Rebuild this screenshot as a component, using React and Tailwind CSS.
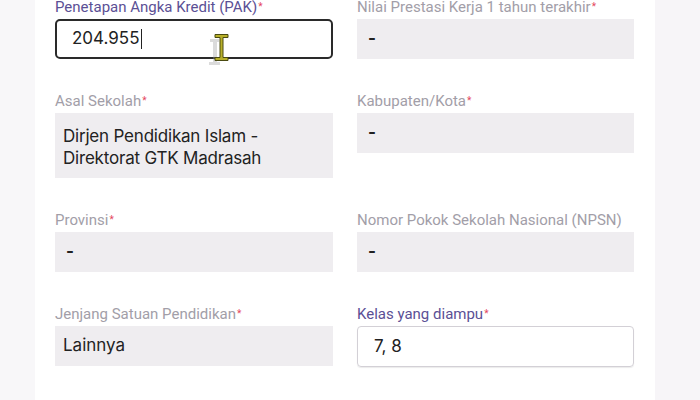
const Label = ({ children, active }) => (
  <div
    className={`h-5 mb-px text-[15px] leading-[18px] font-['Roboto',sans-serif] whitespace-nowrap ${
      active ? "text-[#5b5095]" : "text-[#a29ea8]"
    }`}
  >
    {children}
    <sup className="text-[#e4465c] text-[10px] ml-px relative -top-[2px]">*</sup>
  </div>
);

const LabelPlain = ({ children }) => (
  <div className="h-5 mb-px text-[15px] leading-[18px] font-['Roboto',sans-serif] text-[#a29ea8] whitespace-nowrap">
    {children}
  </div>
);

const ReadBox = ({ children, tall }) => (
  <div
    className={`bg-[#efedf0] px-2 text-[17px] text-[#222] font-['Inter',sans-serif] ${
      tall ? "h-[65px] py-[12px] leading-[22px] tracking-[-0.2px]" : "h-10 flex items-center"
    }`}
  >
    {children}
  </div>
);

const Dash = () => <span className="pl-[3px] font-bold">-</span>;

const IBeam = () => (
  <svg
    className="absolute left-[173px] top-[33px]"
    width="24"
    height="34"
    viewBox="0 0 24 34"
  >
    <g opacity="0.35" fill="#9a9a9a">
      <rect x="2" y="6" width="9" height="3" />
      <rect x="5" y="6" width="4" height="26" />
      <rect x="1" y="29" width="11" height="3" />
    </g>
    <g fill="#b8b02a" stroke="#4a4a10" strokeWidth="1">
      <path d="M7 1.5h13v3h-5v20h5v3H7v-3h5v-20H7z" />
    </g>
  </svg>
);

export default function App() {
  return (
    <div className="w-[700px] h-[400px] overflow-hidden bg-[#f8f7f9] flex">
      <div className="ml-[35px] w-[620px] bg-white pl-5 pr-[21px] relative">
        <div className="grid grid-cols-[278px_277px] gap-x-6 gap-y-[33px] -mt-[2px]">
          <div>
            <Label active>Penetapan Angka Kredit (PAK)</Label>
            <div className="h-10 border-2 border-[#2a2a2a] rounded-[5px] flex items-center pl-[15px] text-[17px] text-[#222] font-['Inter',sans-serif]">
              204.955<span className="inline-block w-px h-[20px] bg-[#222] ml-px" />
            </div>
          </div>
          <div>
            <Label>Nilai Prestasi Kerja 1 tahun terakhir</Label>
            <ReadBox>
              <Dash />
            </ReadBox>
          </div>

          <div>
            <Label>Asal Sekolah</Label>
            <ReadBox tall>
              Dirjen Pendidikan Islam -
              <br />
              Direktorat GTK Madrasah
            </ReadBox>
          </div>
          <div>
            <Label>Kabupaten/Kota</Label>
            <ReadBox>
              <Dash />
            </ReadBox>
          </div>

          <div>
            <Label>Provinsi</Label>
            <ReadBox>
              <Dash />
            </ReadBox>
          </div>
          <div>
            <LabelPlain>Nomor Pokok Sekolah Nasional (NPSN)</LabelPlain>
            <ReadBox>
              <Dash />
            </ReadBox>
          </div>

          <div>
            <Label>Jenjang Satuan Pendidikan</Label>
            <ReadBox>Lainnya</ReadBox>
          </div>
          <div>
            <Label active>Kelas yang diampu</Label>
            <div className="h-[41px] border border-[#d3d0d6] rounded-[4px] shadow-[0_1px_1px_rgba(0,0,0,0.08)] flex items-center pl-4 text-[17px] text-[#222] font-['Inter',sans-serif]">
              7, 8
            </div>
          </div>

          <div>
            <Label>Mata Pelajaran</Label>
          </div>
          <div>
            <Label>Nomor Telepon</Label>
          </div>
        </div>
        <IBeam />
      </div>
      <div className="flex-1 bg-[#f7f5f8]" />
    </div>
  );
}
